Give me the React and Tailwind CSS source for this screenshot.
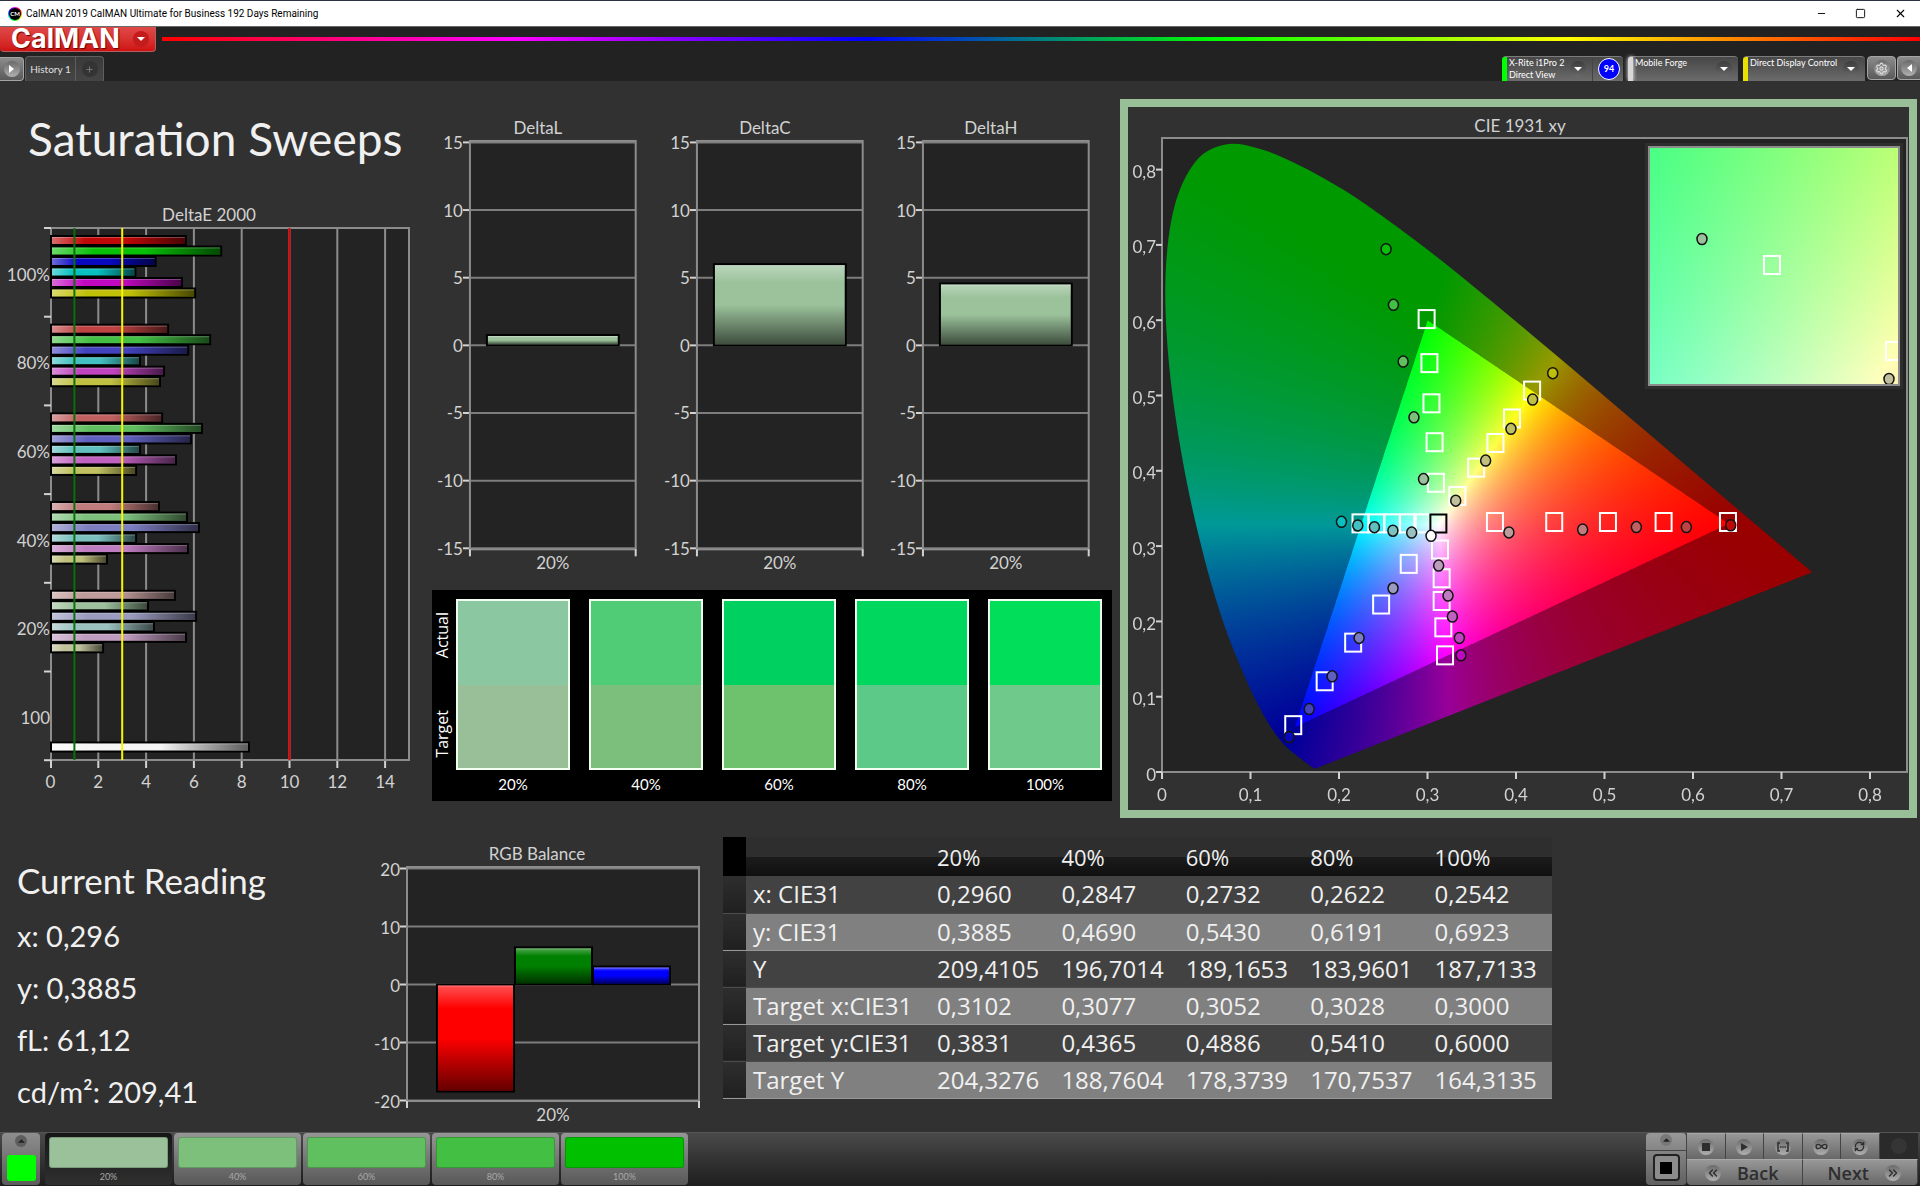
import { useEffect, useRef } from 'react';
import clsx from 'clsx';
import { ChevronsLeft, ChevronsRight, Infinity as InfinityIcon, Minus, Plus, RefreshCw, Settings, Square, X } from 'lucide-react';

const LEVELS = ['100%', '80%', '60%', '40%', '20%'];

// low channel of each saturation level, the high one is always 0xc0
const LOW = [8, 67, 96, 124, 155];

const DELTA_E = [
    [5.66, 7.14, 4.4, 3.55, 5.5, 6.05],
    [4.92, 6.68, 5.76, 3.74, 4.75, 4.58],
    [4.67, 6.34, 5.88, 3.74, 5.25, 3.58],
    [4.54, 5.71, 6.21, 3.58, 5.75, 2.36],
    [5.21, 4.08, 6.09, 4.33, 5.67, 2.2],
];

// red, green, blue, cyan, magenta, yellow
const CHANNELS = [[1, 0, 0], [0, 1, 0], [0, 0, 1], [0, 1, 1], [1, 0, 1], [1, 1, 0]];

const sweepColor = (channel, level) => `rgb(${CHANNELS[channel].map((on) => (on ? 192 : LOW[level])).join(',')})`;

const TARGETS = [
    [0.3762, 0.332], [0.4432, 0.332], [0.5039, 0.332], [0.5668, 0.332], [0.6395, 0.332],
    [0.3095, 0.3841], [0.308, 0.438], [0.3045, 0.4896], [0.3022, 0.543], [0.299, 0.6015],
    [0.2788, 0.2764], [0.2476, 0.2224], [0.216, 0.1718], [0.1838, 0.1205], [0.1483, 0.0622],
    [0.2942, 0.3302], [0.2777, 0.3302], [0.26, 0.3302], [0.2423, 0.3302], [0.2243, 0.3302],
    [0.3141, 0.2955], [0.316, 0.2573], [0.316, 0.2271], [0.3179, 0.1921], [0.3198, 0.1549],
    [0.3337, 0.3666], [0.355, 0.4042], [0.3768, 0.4369], [0.3955, 0.4695], [0.4182, 0.5065],
];

// one list per channel, from 100% to 20%
const ACTUAL = [
    [[0.6426, 0.3277], [0.5925, 0.3252], [0.536, 0.3252], [0.4753, 0.322], [0.392, 0.3182]],
    [[0.2532, 0.6943], [0.2615, 0.6204], [0.2725, 0.545], [0.2847, 0.471], [0.2955, 0.389]],
    [[0.1436, 0.0465], [0.1663, 0.0835], [0.1922, 0.127], [0.2227, 0.178], [0.2611, 0.244]],
    [[0.2028, 0.3322], [0.2212, 0.3274], [0.24, 0.3251], [0.2609, 0.3204], [0.2821, 0.318]],
    [[0.3378, 0.1549], [0.336, 0.178], [0.3281, 0.2064], [0.3232, 0.2343], [0.3126, 0.2742]],
    [[0.4415, 0.5297], [0.4188, 0.4946], [0.3943, 0.4557], [0.3657, 0.4136], [0.3319, 0.3603]],
];

const LOCUS = [
    [0.1741, 0.005], [0.1733, 0.0048], [0.1714, 0.0051], [0.1689, 0.0069], [0.1644, 0.0109], [0.1566, 0.0177],
    [0.144, 0.0297], [0.1355, 0.0399], [0.1241, 0.0578], [0.1096, 0.0868], [0.0913, 0.1327], [0.0687, 0.2007],
    [0.0454, 0.295], [0.0235, 0.4127], [0.0082, 0.5384], [0.0039, 0.6548], [0.0139, 0.7502], [0.0389, 0.812],
    [0.0743, 0.8338], [0.1142, 0.8262], [0.1547, 0.8059], [0.1929, 0.7816], [0.2296, 0.7543], [0.3016, 0.6923],
    [0.3731, 0.6245], [0.4441, 0.5547], [0.5125, 0.4866], [0.5752, 0.4242], [0.627, 0.3725], [0.6915, 0.3083],
    [0.719, 0.2809], [0.7347, 0.2653],
];

const COLUMNS = ['20%', '40%', '60%', '80%', '100%'];

const ROWS = [
    { label: 'x: CIE31', values: ['0,2960', '0,2847', '0,2732', '0,2622', '0,2542'] },
    { label: 'y: CIE31', values: ['0,3885', '0,4690', '0,5430', '0,6191', '0,6923'] },
    { label: 'Y', values: ['209,4105', '196,7014', '189,1653', '183,9601', '187,7133'] },
    { label: 'Target x:CIE31', values: ['0,3102', '0,3077', '0,3052', '0,3028', '0,3000'] },
    { label: 'Target y:CIE31', values: ['0,3831', '0,4365', '0,4886', '0,5410', '0,6000'] },
    { label: 'Target Y', values: ['204,3276', '188,7604', '178,3739', '170,7537', '164,3135'] },
];

const SWATCHES = [
    { label: '20%', actual: 'bg-[#8bc7a0]', target: 'bg-[#99bf99]' },
    { label: '40%', actual: 'bg-[#50cc76]', target: 'bg-[#7cbf7c]' },
    { label: '60%', actual: 'bg-[#00d060]', target: 'bg-[#6ec26d]' },
    { label: '80%', actual: 'bg-[#00d75e]', target: 'bg-[#5dc989]' },
    { label: '100%', actual: 'bg-[#00de5a]', target: 'bg-[#6fc98b]' },
];

const PATTERNS = [
    { label: '20%', color: 'bg-[#9bc19b]', active: true },
    { label: '40%', color: 'bg-[#7cc07c]' },
    { label: '60%', color: 'bg-[#60c060]' },
    { label: '80%', color: 'bg-[#43c043]' },
    { label: '100%', color: 'bg-[#00c000]' },
];

// chromaticity to screen colour, brightest channel at full scale, dimmed outside of the gamut
const xyToRgb = (x, y) => {
    const X = x / y;
    const Z = (1 - x - y) / y;
    const rgb = [
        3.2406 * X - 1.5372 - 0.4986 * Z,
        -0.9689 * X + 1.8758 + 0.0415 * Z,
        0.0557 * X - 0.204 + 1.057 * Z,
    ];
    const scale = Math.min(...rgb) < 0 ? 153 : 255;
    const max = Math.max(...rgb);
    return rgb.map((c) => (Math.max(c, 0) / max) * scale);
};

// smooth curve through all the points
const traceCurve = (ctx, points) => {
    ctx.beginPath();
    ctx.moveTo(...points[0]);
    for (let i = 0; i < points.length - 1; i++) {
        const a = points[i];
        const b = points[i + 1];
        const before = points[i - 1] || a;
        const after = points[i + 2] || b;
        ctx.bezierCurveTo(
            a[0] + (b[0] - before[0]) / 6,
            a[1] + (b[1] - before[1]) / 6,
            b[0] - (after[0] - a[0]) / 6,
            b[1] - (after[1] - a[1]) / 6,
            ...b,
        );
    }
    ctx.closePath();
};

const GamutCanvas = ({ width, height, toXy, outline }) => {
    const ref = useRef(null);

    useEffect(() => {
        const canvas = ref.current;
        const ctx = canvas.getContext('2d');
        const w = width * 2;
        const h = height * 2;
        const image = ctx.createImageData(w, h);
        for (let py = 0; py < h; py++) {
            for (let px = 0; px < w; px++) {
                const [x, y] = toXy(px / 2, py / 2);
                const [r, g, b] = xyToRgb(x, Math.max(y, 0.001));
                const i = (py * w + px) * 4;
                image.data[i] = r;
                image.data[i + 1] = g;
                image.data[i + 2] = b;
                image.data[i + 3] = 255;
            }
        }
        ctx.putImageData(image, 0, 0);
        if (outline) {
            ctx.globalCompositeOperation = 'destination-in';
            traceCurve(ctx, outline.map(([x, y]) => [x * 2, y * 2]));
            ctx.fill();
        }
    }, [width, height, toXy, outline]);

    return <canvas ref={ref} width={width * 2} height={height * 2} className="block w-full h-full" />;
};

const Label = ({ x, y, anchor = 'middle', children }) => (
    <text x={x} y={y} textAnchor={anchor} dominantBaseline="central" fill="#d2d2d2" fontSize="17">
        {children}
    </text>
);

const Line = ({ x1, y1, x2, y2, color = '#8c8c8c', width = 2 }) => (
    <line x1={x1} y1={y1} x2={x2} y2={y2} stroke={color} strokeWidth={width} />
);

const Gradients = () => (
    <svg className="absolute w-0 h-0" aria-hidden="true">
        <defs>
            <linearGradient id="shade-right">
                <stop offset="0" stopColor="#fff" stopOpacity="0.4" />
                <stop offset="0.25" stopColor="#fff" stopOpacity="0" />
                <stop offset="0.55" stopColor="#000" stopOpacity="0" />
                <stop offset="1" stopColor="#000" stopOpacity="0.62" />
            </linearGradient>
            <linearGradient id="shade-down" x2="0" y2="1">
                <stop offset="0" stopColor="#fff" stopOpacity="0.32" />
                <stop offset="0.22" stopColor="#fff" stopOpacity="0" />
                <stop offset="0.5" stopColor="#000" stopOpacity="0" />
                <stop offset="1" stopColor="#000" stopOpacity="0.6" />
            </linearGradient>
        </defs>
    </svg>
);

const Bar = ({ x, y, width, height, color, shade = 'url(#shade-down)' }) => (
    <g>
        <rect x={x} y={y} width={width} height={height} fill={color} stroke="#000" strokeWidth="2" />
        <rect x={x + 1} y={y + 1} width={width - 2} height={height - 2} fill={shade} />
        <rect x={x + 1} y={y + 1} width={width - 2} height="1" fill="#fff" fillOpacity="0.25" />
    </g>
);

const DeltaEChart = () => {
    const px = (v) => 50.5 + v * 23.9;
    const py = (group) => 28 + group * 88.7;

    return (
        <svg viewBox="0 0 430 600" className="block w-full">
            <Label x="209" y="14">DeltaE 2000</Label>
            <rect x="51" y="28" width="358" height="532" fill="#232323" />
            {[2, 4, 6, 8, 10, 12, 14].map((v) => (
                <g key={v}>
                    <Line x1={px(v)} y1="28" x2={px(v)} y2="560" />
                    <Line x1={px(v)} y1="560" x2={px(v)} y2="568" color="#d2d2d2" />
                </g>
            ))}
            <rect x="51" y="28" width="358" height="532" fill="none" stroke="#8c8c8c" strokeWidth="2" />
            <Line x1="51" y1="560" x2="51" y2="568" color="#d2d2d2" />
            {[0, 1, 2, 3, 4, 5, 6].map((i) => (
                <Line key={i} x1="44" y1={py(i)} x2="51" y2={py(i)} color="#d2d2d2" />
            ))}
            {DELTA_E.map((values, level) =>
                values.map((v, channel) => (
                    <Bar
                        key={`${level}-${channel}`}
                        x={51}
                        y={py(level) + 8 + channel * 10.5}
                        width={px(v) - 51}
                        height={9}
                        color={sweepColor(channel, level)}
                        shade="url(#shade-right)"
                    />
                )),
            )}
            <Bar x={51} y={py(5) + 71} width={px(8.3) - 51} height={9} color="#f5f5f5" shade="url(#shade-right)" />
            <Line x1={px(1)} y1="28" x2={px(1)} y2="560" color="#0a6e0a" />
            <Line x1={px(3)} y1="28" x2={px(3)} y2="560" color="#f5f50a" />
            <Line x1={px(10)} y1="28" x2={px(10)} y2="560" color="#e60000" />
            {[...LEVELS, '100'].map((label, i) => (
                <Label key={label} x="50" y={py(i) + 46} anchor="end">{label}</Label>
            ))}
            {[0, 2, 4, 6, 8, 10, 12, 14].map((v) => (
                <Label key={v} x={px(v)} y="581">{v}</Label>
            ))}
        </svg>
    );
};

const DeltaChart = ({ title, value }) => {
    const py = (v) => 234.7 - v * 13.55;

    return (
        <svg viewBox="0 0 227 470" className="block w-full">
            <Label x="108" y="17">{title}</Label>
            <rect x="40" y="30" width="166" height="409" fill="#232323" />
            {[15, 10, 5, 0, -5, -10, -15].map((v) => (
                <g key={v}>
                    <Line x1="40" y1={py(v)} x2="206" y2={py(v)} color="#7d7d7d" />
                    <Line x1="33" y1={py(v)} x2="40" y2={py(v)} color="#d2d2d2" />
                    <Label x="33" y={py(v)} anchor="end">{v}</Label>
                </g>
            ))}
            <rect x="40" y="30" width="166" height="409" fill="none" stroke="#8c8c8c" strokeWidth="2" />
            <Line x1="40" y1="439" x2="40" y2="446" color="#d2d2d2" />
            <Line x1="206" y1="439" x2="206" y2="446" color="#d2d2d2" />
            <Bar x={57} y={py(value)} width={132} height={value * 13.55} color="#9bc29b" />
            <Label x="123" y="452">20%</Label>
        </svg>
    );
};

const RgbBalance = () => {
    const py = (v) => 154.5 - v * 5.8;

    return (
        <svg viewBox="0 0 350 300" className="block w-full">
            <Label x="167" y="23">RGB Balance</Label>
            <rect x="37" y="37" width="292" height="234" fill="#232323" />
            {[20, 10, 0, -10, -20].map((v) => (
                <g key={v}>
                    <Line x1="37" y1={py(v)} x2="329" y2={py(v)} color="#7d7d7d" />
                    <Line x1="30" y1={py(v)} x2="37" y2={py(v)} color="#d2d2d2" />
                    <Label x="30" y={py(v) + 1} anchor="end">{v}</Label>
                </g>
            ))}
            <rect x="37" y="37" width="292" height="234" fill="none" stroke="#8c8c8c" strokeWidth="2" />
            <Line x1="37" y1="271" x2="37" y2="278" color="#d2d2d2" />
            <Line x1="329" y1="271" x2="329" y2="278" color="#d2d2d2" />
            <Bar x={67} y={py(0)} width={77} height={107} color="#ff0000" />
            <Bar x={145} y={py(6.4)} width={77} height={37} color="#008000" />
            <Bar x={223} y={py(3.1)} width={77} height={18} color="#0000ff" />
            <Label x="183" y="284">20%</Label>
        </svg>
    );
};

const TargetMark = ({ x, y, color = '#fff' }) => (
    <rect x={x - 8} y={y - 9} width="16" height="18" fill="none" stroke={color} strokeWidth="2" />
);

const ActualMark = ({ x, y, color }) => (
    <ellipse cx={x} cy={y} rx="5" ry="5.5" fill={color} stroke="#141414" strokeWidth="1.5" />
);

const cieX = (x) => 34 + x * 885;
const cieY = (y) => 665 - y * 753;
const cieXy = (px, py) => [px / 885, (634 - py) / 753];
const insetXy = (px, py) => [0.3102 + (px - 124) / 4950, 0.3831 - (py - 118) / 4880];
const locusOutline = LOCUS.map(([x, y]) => [x * 885, 634 - y * 753]);

const CieChart = () => (
    <svg viewBox="0 0 781 703" className="block w-full">
        <Label x="392" y="18">CIE 1931 xy</Label>
        <rect x="34" y="31" width="745" height="634" fill="#232323" stroke="#8c8c8c" strokeWidth="2" />
        <foreignObject x="34" y="31" width="660" height="632">
            <GamutCanvas width={660} height={632} toXy={cieXy} outline={locusOutline} />
        </foreignObject>
        {TARGETS.map(([x, y]) => (
            <TargetMark key={`${x}-${y}`} x={cieX(x)} y={cieY(y)} />
        ))}
        <TargetMark x={cieX(0.3123)} y={cieY(0.33)} color="#000" />
        {ACTUAL.map((points, channel) =>
            points.map(([x, y], level) => (
                <ActualMark key={`${channel}-${level}`} x={cieX(x)} y={cieY(y)} color={sweepColor(channel, level)} />
            )),
        )}
        <ActualMark x={cieX(0.304)} y={cieY(0.3136)} color="#fff" />

        <rect x="517" y="36" width="258" height="246" fill="#2e2e2e" />
        <rect x="521" y="40" width="250" height="238" fill="none" stroke="#8c8c8c" strokeWidth="2" />
        <svg x="522" y="41" width="248" height="236" viewBox="0 0 248 236">
            <foreignObject width="248" height="236">
                <GamutCanvas width={248} height={236} toXy={insetXy} />
            </foreignObject>
            <TargetMark x={122} y={117} />
            <ActualMark x={52} y={91} color="#9bc09b" />
            <TargetMark x={244} y={203} />
            <ActualMark x={239} y={231} color="#c0c09b" />
        </svg>

        {[0, 1, 2, 3, 4, 5, 6, 7, 8].map((v) => (
            <g key={v}>
                <Line x1="28" y1={cieY(v / 10)} x2="34" y2={cieY(v / 10)} color="#d2d2d2" />
                <Label x="28" y={cieY(v / 10) + 2} anchor="end">{v ? `0,${v}` : '0'}</Label>
                <Line x1={cieX(v / 10)} y1="665" x2={cieX(v / 10)} y2="672" color="#d2d2d2" />
                <Label x={cieX(v / 10)} y="687">{v ? `0,${v}` : '0'}</Label>
            </g>
        ))}
    </svg>
);

const RoundIcon = ({ dark, children }) => (
    <span
        className={clsx(
            'flex items-center justify-center w-4 h-4 shrink-0 rounded-full',
            dark ? 'bg-linear-to-b from-[#3c3c3c] to-[#6a6a6a]' : 'bg-linear-to-b from-[#6a6a6a] to-[#b0b0b0]',
        )}
    >
        {children}
    </span>
);

const DropArrow = () => (
    <svg viewBox="0 0 8 4" className="w-2 h-1">
        <path d="M0 0h8L4 4z" fill="#fff" />
    </svg>
);

const DeviceTab = ({ marker, lines, className, children }) => (
    <div className={clsx('flex h-[25px] rounded-t-[4px] border-t border-[#7c7c7c] bg-linear-to-b from-[#474747] to-[#6b6b6b]', className)}>
        <span className={clsx('w-[5px] shrink-0 rounded-tl-[3px]', marker)} />
        <button className="flex flex-1 min-w-0 items-center justify-between pl-[2px] pr-[6px] text-left text-[9px] leading-[12px] text-white">
            <span className="self-start whitespace-nowrap">
                {lines.map((line) => (
                    <span key={line} className="block">{line}</span>
                ))}
            </span>
            <RoundIcon dark><DropArrow /></RoundIcon>
        </button>
        {children}
    </div>
);

const Header = () => (
    <header>
        <div className="flex items-center justify-between h-[27px] pl-2 pr-[13px] bg-white border-t border-b border-t-[#2c3444] border-b-[#6a6a6a] text-black">
            <div className="flex items-center gap-1">
                <span className="flex items-center justify-center w-[14px] h-[14px] rounded-full bg-[conic-gradient(#f0f,#f00,#ff0,#0f0,#0ff,#00f,#f0f)]">
                    <span className="flex items-center justify-center w-3 h-3 rounded-full bg-black text-[6px] font-bold text-white">CM</span>
                </span>
                <span className="font-['Roboto',sans-serif] text-[10px]">CalMAN 2019 CalMAN Ultimate for Business 192 Days Remaining</span>
            </div>
            <div className="flex items-center gap-[28px]">
                <button aria-label="Minimize"><Minus size={11} strokeWidth={2} /></button>
                <button aria-label="Maximize"><Square size={11} strokeWidth={2} /></button>
                <button aria-label="Close"><X size={13} strokeWidth={2} /></button>
            </div>
        </div>
        <div className="flex items-start h-[29px]">
            <button
                aria-label="CalMAN menu"
                className="flex items-center justify-between w-[156px] h-[25px] pl-[11px] pr-[6px] rounded-b-[4px] border-b border-r border-[#b06060] bg-linear-to-b from-[#e04848] to-[#cf1010]"
            >
                <span className="font-['Inter',sans-serif] text-[27px] leading-[24px] font-bold text-white [text-shadow:1px_1px_1px_#600]">CalMAN</span>
                <span className="flex items-center justify-center w-4 h-4 rounded-full bg-[#c41c1c]"><DropArrow /></span>
            </button>
            <div className="flex-1 h-1 mt-[10px] ml-[6px] bg-[linear-gradient(to_right,#f00,#f0f_20%,#00f_40%,#0f0_60%,#ff0_80%,#f00)]" />
        </div>
        <div className="flex items-end justify-between h-[25px]">
            <div className="flex items-end gap-px">
                <button aria-label="Show workflow" className="flex items-center justify-center w-6 h-6 rounded-r-[4px] border border-l-0 border-[#a5a5a5] bg-linear-to-b from-[#8c8c8c] to-[#5a5a5a]">
                    <RoundIcon>
                        <svg viewBox="0 0 5 8" className="w-[5px] h-2"><path d="M0 0v8l5-4z" fill="#fff" /></svg>
                    </RoundIcon>
                </button>
                <div className="flex h-[25px] rounded-t-[4px] border border-b-0 border-[#5f5f5f] bg-linear-to-b from-[#3a3a3a] to-[#454545]">
                    <button className="w-[50px] text-[10px] text-[#e0e0e0] border-r border-[#5f5f5f]">History 1</button>
                    <button aria-label="Add history" className="flex items-center justify-center w-[27px] text-[#8a8a8a]">
                        <span className="flex items-center justify-center w-4 h-4 rounded-full bg-[#343434]"><Plus size={9} /></span>
                    </button>
                </div>
            </div>
            <div className="flex items-end gap-[5px]">
                <DeviceTab className="w-[121px]" marker="bg-[#00ff00]" lines={['X-Rite i1Pro 2', 'Direct View']}>
                    <span className="flex items-center justify-center w-[31px] pl-[2px] border-l border-[#444]">
                        <span className="flex items-center justify-center w-[22px] h-[22px] shrink-0 rounded-full border border-white bg-[#0000ff] text-[9px] font-bold text-white">94</span>
                    </span>
                </DeviceTab>
                <DeviceTab className="w-[110px]" marker="bg-[#d8d8d8] shadow-[0_0_4px_#fff]" lines={['Mobile Forge']} />
                <DeviceTab className="w-[122px]" marker="bg-[#e8e000]" lines={['Direct Display Control']} />
                <div className="flex gap-px -ml-[3px]">
                    <button aria-label="Settings" className="flex items-center justify-center w-[29px] h-6 mb-px rounded-[4px] border border-[#a5a5a5] bg-linear-to-b from-[#8c8c8c] to-[#5a5a5a] text-[#e0e0e0]">
                        <RoundIcon><Settings size={13} /></RoundIcon>
                    </button>
                    <button aria-label="Collapse" className="flex items-center justify-center w-[23px] h-6 mb-px rounded-l-[4px] border border-r-0 border-[#a5a5a5] bg-linear-to-b from-[#8c8c8c] to-[#5a5a5a]">
                        <RoundIcon>
                            <svg viewBox="0 0 5 8" className="w-[5px] h-2"><path d="M5 0v8L0 4z" fill="#fff" /></svg>
                        </RoundIcon>
                    </button>
                </div>
            </div>
        </div>
    </header>
);

const SwatchPanel = () => (
    <div className="flex mt-[10px] ml-[2px] pt-[9px] pr-[10px] h-[211px] bg-black text-white">
        <div className="flex flex-col justify-between w-6 h-[171px] py-[13px] items-start font-['Open_Sans',sans-serif] text-[16px] leading-[20px]">
            <span className="[writing-mode:vertical-rl] rotate-180">Actual</span>
            <span className="[writing-mode:vertical-rl] rotate-180">Target</span>
        </div>
        <div className="grid flex-1 grid-cols-5 gap-[19px]">
            {SWATCHES.map(({ label, actual, target }) => (
                <div key={label} className="text-center">
                    <div className="flex flex-col h-[171px] border-2 border-[#f0fff0]">
                        <div className={clsx('flex-1', actual)} />
                        <div className={clsx('flex-1', target)} />
                    </div>
                    <div className="pt-[4px] text-[15px] leading-[20px]">{label}</div>
                </div>
            ))}
        </div>
    </div>
);

const ReadingTable = () => (
    <table className="w-[829px] table-fixed border-collapse text-left font-['Open_Sans',sans-serif] text-[24px] leading-[30px] text-[#f0f0f0]">
        <colgroup>
            <col className="w-[23px]" />
            <col className="w-[184px]" />
        </colgroup>
        <thead>
            <tr className="h-[39px] bg-[linear-gradient(#2e2e2e_50%,#1c1c1c_50%,#101010)]">
                <td className="bg-black" />
                <td />
                {COLUMNS.map((column) => (
                    <th key={column} className="p-0 pl-[7px] font-normal text-[22px]">{column}</th>
                ))}
            </tr>
        </thead>
        <tbody>
            {ROWS.map(({ label, values }, i) => (
                <tr key={label} className={clsx('h-[37px]', i % 2 ? 'bg-[#808080] border-b border-[#989898]' : 'bg-[#424242] border-b border-[#4c4c4c]')}>
                    <td className="bg-linear-to-b from-[#2e2e2e] to-[#202020]" />
                    <th scope="row" className="p-0 pl-[7px] font-normal whitespace-nowrap">{label}</th>
                    {values.map((value, column) => (
                        <td key={column} className="p-0 pl-[7px]">{value}</td>
                    ))}
                </tr>
            ))}
        </tbody>
    </table>
);

const ToolButton = ({ label, className, children }) => (
    <button
        aria-label={label}
        className={clsx('flex items-center border-t border-r border-t-[#a8a8a8] border-r-[#444] bg-linear-to-b from-[#989898] to-[#686868] text-[#2e2e2e]', className || 'justify-center')}
    >
        {children}
    </button>
);

const Footer = () => (
    <footer className="flex items-start justify-between h-[54px] pl-[2px] pr-[2px] border-t border-[#555] bg-linear-to-b from-[#4a4a4a] to-[#1e1e1e]">
        <div className="flex gap-[5px]">
            <button aria-label="Pattern options" className="flex flex-col items-center justify-between w-[38px] h-[52px] pt-[2px] pb-1 rounded-[4px] bg-linear-to-b from-[#8e8e8e] to-[#5c5c5c]">
                <span className="flex items-center justify-center w-3 h-3 rounded-full bg-[#5e5e5e]">
                    <svg viewBox="0 0 8 4" className="w-[7px] h-1"><path d="M0 4h8L4 0z" fill="#222" /></svg>
                </span>
                <span className="w-[29px] h-[26px] rounded-[3px] bg-[#00ff00]" />
            </button>
            <div className="flex gap-[2px]">
                {PATTERNS.map(({ label, color, active }) => (
                    <button
                        key={label}
                        className={clsx(
                            'w-[127px] h-[52px] px-1 pt-1 rounded-[4px] text-[9px] leading-[18px] text-[#a8a8a8]',
                            active ? 'bg-linear-to-b from-[#161616] to-[#303030]' : 'bg-linear-to-b from-[#969696] to-[#585858]',
                        )}
                    >
                        <span className={clsx('block h-[31px] rounded-[3px] border border-black/20', color)} />
                        {label}
                    </button>
                ))}
            </div>
        </div>
        <div className="flex h-[52px]">
            <button aria-label="Pattern window" className="flex flex-col items-center justify-between w-[41px] pt-[1px] pb-1 rounded-[4px] border-r border-[#444] bg-linear-to-b from-[#989898] to-[#606060]">
                <span className="flex items-center justify-center w-3 h-3 rounded-full bg-[#787878]">
                    <svg viewBox="0 0 8 4" className="w-[7px] h-1"><path d="M0 4h8L4 0z" fill="#222" /></svg>
                </span>
                <span className="w-full h-px bg-[#444]" />
                <span className="flex items-center justify-center w-[27px] h-[27px] rounded-[4px] border-2 border-[#222] bg-[#8c8c8c]">
                    <span className="w-3 h-3 bg-black" />
                </span>
            </button>
            <div className="w-[231px]">
                <div className="grid grid-cols-6 h-[26px]">
                    <ToolButton label="Stop"><RoundIcon><span className="w-2 h-2 bg-[#2e2e2e]" /></RoundIcon></ToolButton>
                    <ToolButton label="Read">
                        <RoundIcon><svg viewBox="0 0 8 8" className="w-2 h-2"><path d="M1 0v8l7-4z" fill="#2e2e2e" /></svg></RoundIcon>
                    </ToolButton>
                    <ToolButton label="Read series">
                        <RoundIcon>
                            <svg viewBox="0 0 12 10" className="w-3 h-[10px]" fill="none" stroke="#2e2e2e" strokeWidth="1.5">
                                <path d="M3 1H1v8h2M9 1h2v8H9M3 5h1.500M5.300 5h1.400M7.500 5H9" />
                            </svg>
                        </RoundIcon>
                    </ToolButton>
                    <ToolButton label="Read continuously"><RoundIcon><InfinityIcon size={13} strokeWidth={2.5} /></RoundIcon></ToolButton>
                    <ToolButton label="Refresh"><RoundIcon><RefreshCw size={11} strokeWidth={3} /></RoundIcon></ToolButton>
                    <span className="flex items-center justify-center bg-[#2a2a2a]"><span className="w-4 h-4 rounded-full bg-[#353535]" /></span>
                </div>
                <div className="grid grid-cols-2 h-[26px] font-['Open_Sans',sans-serif] text-[18px] leading-[24px] font-semibold">
                    <ToolButton label="Back" className="gap-4 pl-[18px] rounded-bl-[4px]">
                        <RoundIcon><ChevronsLeft size={14} strokeWidth={2.5} /></RoundIcon>
                        Back
                    </ToolButton>
                    <ToolButton label="Next" className="gap-4 justify-end pr-4 rounded-br-[4px]">
                        Next
                        <RoundIcon><ChevronsRight size={14} strokeWidth={2.5} /></RoundIcon>
                    </ToolButton>
                </div>
            </div>
        </div>
    </footer>
);

const App = () => (
    <div className="flex flex-col min-h-screen bg-[#222222] font-['Lato','Open_Sans',sans-serif] text-[#f0f0f0]">
        <Gradients />
        <Header />
        <main className="flex-1 bg-[#313131]">
            <div className="grid grid-cols-[430fr_690fr_800fr]">
                <section>
                    <h1 className="h-[119px] pl-7 pt-[28px] text-[46px] leading-[60px] whitespace-nowrap">Saturation Sweeps</h1>
                    <DeltaEChart />
                </section>
                <section className="pt-[30px] pr-[8px]">
                    <div className="grid grid-cols-3 pr-[2px]">
                        <DeltaChart title="DeltaL" value={0.76} />
                        <DeltaChart title="DeltaC" value={6} />
                        <DeltaChart title="DeltaH" value={4.57} />
                    </div>
                    <SwatchPanel />
                </section>
                <section className="pt-[18px] pr-[3px]">
                    <div className="border-8 border-[#99bf99]">
                        <CieChart />
                    </div>
                </section>
            </div>
            <div className="grid grid-cols-[370fr_353fr_1197fr] pt-3">
                <section className="pl-[17px] pt-[24px]">
                    <h2 className="mb-[4px] text-[35px] leading-[52px] whitespace-nowrap">Current Reading</h2>
                    <ul className="text-[29px] leading-[52px]">
                        <li>x: 0,296</li>
                        <li>y: 0,3885</li>
                        <li>fL: 61,12</li>
                        <li>cd/m²: 209,41</li>
                    </ul>
                </section>
                <section className="pr-[3px]">
                    <RgbBalance />
                </section>
                <section className="pt-[7px]">
                    <ReadingTable />
                </section>
            </div>
        </main>
        <Footer />
    </div>
);

export default App;
